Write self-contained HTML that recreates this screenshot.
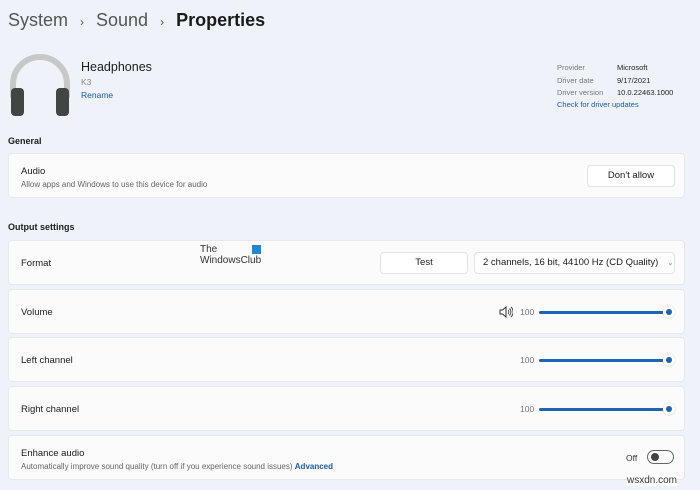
<!DOCTYPE html>
<html><head><style>
*{margin:0;padding:0;box-sizing:border-box}
body{width:700px;height:490px;background:#eff3f9;font-family:"Liberation Sans",sans-serif;position:relative;overflow:hidden;color:#1b1b1b}
.a{position:absolute}
.card{position:absolute;left:8px;width:677px;background:#fbfbfc;border:1px solid #e6e9ee;border-radius:4px}
.lbl{position:absolute;left:12px;font-size:9.5px;color:#1b1b1b}
.sub{font-size:8px;color:#666}
.btn{position:absolute;background:#fff;border:1px solid #e2e2e2;border-radius:4px;font-size:9.5px;text-align:center}
.sl{position:absolute;height:3px;background:#1e63b4;border-radius:2px}
.th{position:absolute;width:12px;height:12px;border-radius:6px;background:#fff;box-shadow:0 0 1px #999}
.th:after{content:"";position:absolute;left:3px;top:3px;width:6px;height:6px;border-radius:3px;background:#1e63b4}
.n{position:absolute;font-size:8.5px;color:#777}
</style></head><body>
<div class="a" style="left:8px;top:10px;font-size:18px;color:#555">System <span style="font-size:12px;margin:0 7px">&#8250;</span> Sound <span style="font-size:12px;margin:0 7px">&#8250;</span> <span style="color:#1b1b1b;font-weight:bold">Properties</span></div>
<svg class="a" style="left:8px;top:52px" width="64" height="66" viewBox="0 0 64 66">
<path d="M5 46 V32 A27 27 0 0 1 59 32 V46" fill="none" stroke="#c8c8c8" stroke-width="6"/>
<rect x="3" y="36" width="13" height="28" rx="4" fill="#444"/>
<rect x="48" y="36" width="13" height="28" rx="4" fill="#444"/>
</svg>
<div class="a" style="left:81px;top:60px;font-size:12.5px">Headphones</div>
<div class="a" style="left:81px;top:77px;font-size:8.5px;color:#888">K3</div>
<div class="a" style="left:81px;top:90px;font-size:8.5px;color:#1a5aa8">Rename</div>
<div class="a" style="left:557px;top:62px;font-size:7.5px;color:#777;line-height:12.5px">Provider<br>Driver date<br>Driver version</div>
<div class="a" style="left:617px;top:62px;font-size:7.5px;color:#222;line-height:12.5px">Microsoft<br>9/17/2021<br>10.0.22463.1000</div>
<div class="a" style="left:557px;top:100px;font-size:7.5px;color:#1a5aa8">Check for driver updates</div>
<div class="a" style="left:8px;top:136px;font-size:9px;font-weight:bold">General</div>
<div class="card" style="top:153px;height:45px"><div class="lbl" style="top:12px">Audio<div class="sub" style="margin-top:3px">Allow apps and Windows to use this device for audio</div></div>
<div class="btn" style="left:578px;top:11px;width:88px;height:22px;line-height:20px">Don't allow</div></div>
<div class="a" style="left:8px;top:222px;font-size:9px;font-weight:bold">Output settings</div>
<div class="card" style="top:240px;height:45px"><div class="lbl" style="top:17px">Format</div>
<div class="a" style="left:191px;top:3px;font-size:10px;color:#333;line-height:11px">The<br>WindowsClub</div>
<div class="a" style="left:243px;top:4px;width:9px;height:9px;background:#1e88d8"></div>
<div class="btn" style="left:371px;top:11px;width:88px;height:22px;line-height:20px">Test</div>
<div class="btn" style="left:465px;top:11px;width:201px;height:22px;line-height:20px;text-align:left;padding-left:8px">2 channels, 16 bit, 44100 Hz (CD Quality) <span style="color:#888;margin-left:6px;font-size:8px">&#8964;</span></div></div>
<div class="card" style="top:289px;height:45px"><div class="lbl" style="top:17px">Volume</div>
<svg class="a" style="left:490px;top:16px" width="14" height="12" viewBox="0 0 14 12"><path d="M1 4h2.5L7 1v10L3.5 8H1z" fill="none" stroke="#333" stroke-width="1"/><path d="M9 4a3 3 0 0 1 0 4M10.5 2.5a5 5 0 0 1 0 7M12 1a7 7 0 0 1 0 10" fill="none" stroke="#333" stroke-width="0.9"/></svg>
<div class="n" style="left:511px;top:17px">100</div><div class="sl" style="left:530px;top:21px;width:130px"></div><div class="th" style="left:654px;top:16px"></div></div>
<div class="card" style="top:337px;height:45px"><div class="lbl" style="top:17px">Left channel</div>
<div class="n" style="left:511px;top:17px">100</div><div class="sl" style="left:530px;top:21px;width:130px"></div><div class="th" style="left:654px;top:16px"></div></div>
<div class="card" style="top:386px;height:45px"><div class="lbl" style="top:17px">Right channel</div>
<div class="n" style="left:511px;top:17px">100</div><div class="sl" style="left:530px;top:21px;width:130px"></div><div class="th" style="left:654px;top:16px"></div></div>
<div class="card" style="top:435px;height:45px"><div class="lbl" style="top:12px">Enhance audio<div class="sub" style="margin-top:3px">Automatically improve sound quality (turn off if you experience sound issues) <span style="color:#1a5aa8;font-weight:bold">Advanced</span></div></div>
<div class="n" style="left:617px;top:17px;color:#333">Off</div>
<div class="a" style="left:638px;top:14px;width:27px;height:14px;border:1px solid #666;border-radius:7px"><div class="a" style="left:3px;top:2px;width:8px;height:8px;border-radius:4px;background:#444"></div></div></div>
<div class="a" style="left:627px;top:475px;font-size:10px;color:#333;background:#fff">wsxdn.com</div>
</body></html>
